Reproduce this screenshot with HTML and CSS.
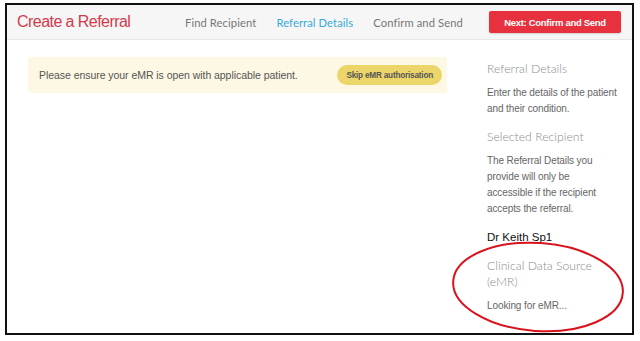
FILE: index.html
```html
<!DOCTYPE html>
<html lang="en">
<head>
  <meta charset="UTF-8" />
  <title>Create a Referral</title>
  <link rel="stylesheet" href="styles.css">
</head>
<body>

  <div class="frame">
    <div class="topbar">
      <h1 class="title">Create a Referral</h1>
      <nav class="steps">
        <span class="step">Find Recipient</span>
        <span class="step active">Referral Details</span>
        <span class="step">Confirm and Send</span>
      </nav>
      <button class="next-btn">Next: Confirm and Send</button>
    </div>

    <div class="content">
      <div class="main">
        <div class="notice">
          <span>Please ensure your eMR is open with applicable patient.</span>
          <button class="skip-btn">Skip eMR authorisation</button>
        </div>
      </div>

      <aside class="sidebar">
        <h4>Referral Details</h4>
        <p>Enter the details of the patient and their condition.</p>
        <h4>Selected Recipient</h4>
        <p>The Referral Details you provide will only be accessible if the recipient accepts the referral.</p>
        <div class="recipient">Dr Keith Sp1</div>
        <h4>Clinical Data Source<br>(eMR)</h4>
        <p class="small">Looking for eMR...</p>
      </aside>
    </div>
  </div>

  <!-- annotation circle drawn over the screenshot -->
  <svg class="markup" width="640" height="341" viewBox="0 0 640 341">
    <ellipse cx="538" cy="287" rx="85" ry="44" transform="rotate(4 538 287)"
      fill="none" stroke="#d9121c" stroke-width="2" />
  </svg>

</body>
</html>
```

FILE: styles.css
```css
body {
  margin: 0;
  background: #fff;
  font-family: 'Liberation Sans', Arial, sans-serif;
  color: #555;
}
.frame {
  position: relative;
  margin: 3px 0 0 5px;
  width: 625px;
  height: 328px;
  border: 2px solid #111;
  overflow: hidden;
}
.topbar {
  display: flex;
  align-items: center;
  height: 34px;
  padding: 0 11px 0 10px;
  background: #f6f6f6;
  border-bottom: 1px solid #e6e6e6;
  white-space: nowrap;
}
.title {
  flex-shrink: 0;
  margin: 0;
  font-size: 16px;
  font-weight: normal;
  letter-spacing: -0.55px;
  color: #d23a4c;
  width: 168px;
}
.steps {
  display: flex;
  flex-shrink: 0;
  gap: 20px;
  font-family: Lato, sans-serif;
  font-size: 11.2px;
  letter-spacing: 0.1px;
  color: #777;
}
.step.active {
  color: #35abd6;
}
.next-btn {
  flex-shrink: 0;
  margin-left: auto;
  height: 22px;
  width: 132px;
  border: none;
  border-radius: 2px;
  background: #e8313e;
  color: #fff;
  font-family: 'Liberation Sans', Arial, sans-serif;
  font-weight: bold;
  font-size: 9.5px;
  letter-spacing: -0.3px;
  white-space: nowrap;
  box-shadow: 0 1px 2px rgba(0,0,0,0.15);
}
.content {
  display: flex;
}
.main {
  flex: 1;
  padding: 17px 40px 0 21px;
}
.notice {
  display: flex;
  align-items: center;
  justify-content: space-between;
  height: 36px;
  padding: 0 5px 0 11px;
  background: #fdf8e3;
  border-radius: 3px;
  font-size: 10.5px;
  letter-spacing: -0.05px;
  color: #555;
  white-space: nowrap;
}
.skip-btn {
  height: 20px;
  padding: 0 9px;
  border: none;
  border-radius: 10px;
  background: #ecd66a;
  color: #555;
  font-family: 'Liberation Sans', Arial, sans-serif;
  font-weight: bold;
  font-size: 8.2px;
  letter-spacing: -0.2px;
  white-space: nowrap;
}
.sidebar {
  flex-shrink: 0;
  width: 130px;
  padding: 21px 15px 0 0;
}
.sidebar h4 {
  margin: 0 0 8px;
  font-family: Lato, sans-serif;
  font-weight: 300;
  font-size: 12.2px;
  line-height: 16px;
  color: #8c8c8c;
  white-space: nowrap;
}
.sidebar p {
  margin: 0 0 12px;
  font-size: 10px;
  line-height: 16px;
  letter-spacing: -0.1px;
  color: #666;
}
.sidebar p.small {
  margin-top: 3px;
}
.recipient {
  margin: 14px 0 15px;
  font-size: 11.5px;
  color: #111;
}
.markup {
  position: absolute;
  left: 0;
  top: 0;
  pointer-events: none;
}
```
